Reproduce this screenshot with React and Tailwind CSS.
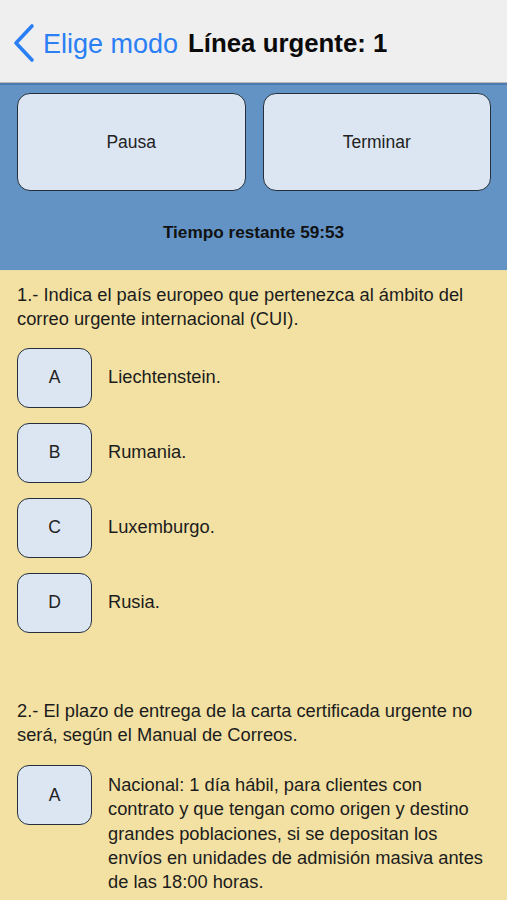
export default function App() {
  const opts1 = [
    ["A", "Liechtenstein."],
    ["B", "Rumania."],
    ["C", "Luxemburgo."],
    ["D", "Rusia."],
  ];
  return (
    <div className="w-[507px] h-[900px] overflow-hidden bg-[#f2e1a3] font-['Liberation_Sans',Arial,sans-serif]">
      {/* Header */}
      <div className="h-[83px] bg-[#efefef] border-b border-[#b9b9b9] flex items-center pl-[13px] pt-[6px]">
        <svg width="22" height="40" viewBox="0 0 22 40" className="shrink-0 -mt-[2px]">
          <polyline points="19,3 3,20 19,37" fill="none" stroke="#2b7ff4" strokeWidth="3.6" strokeLinecap="round" strokeLinejoin="round" />
        </svg>
        <span className="ml-[8px] text-[27px] text-[#2b7ff4] leading-none whitespace-nowrap">Elige modo</span>
        <span className="ml-[10px] text-[25.8px] font-bold text-[#0a0a0a] leading-none whitespace-nowrap">Línea urgente: 1</span>
      </div>
      {/* Blue panel */}
      <div className="h-[188px] bg-[#6393c5] border-t-2 border-[#4d7bb0] border-b border-b-[#e9dca6] flex flex-col">
        <div className="flex gap-[17px] pl-[17px] pr-[16px] pt-[8px]">
          <div className="flex-1 h-[98px] bg-[#dce6f2] border-[1.5px] border-[#26303c] rounded-[13px] flex items-center justify-center text-[17.5px] text-[#222]">Pausa</div>
          <div className="flex-1 h-[98px] bg-[#dce6f2] border-[1.5px] border-[#26303c] rounded-[13px] flex items-center justify-center text-[17.5px] text-[#222]">Terminar</div>
        </div>
        <div className="mt-[29px] text-center text-[17.2px] font-bold text-[#111] leading-[24px]">Tiempo restante 59:53</div>
      </div>
      {/* Question 1 */}
      <div className="px-[17px] pt-[12px]">
        <div className="text-[18.3px] leading-[24.3px] text-[#1c1c1c]">
          <div className="whitespace-nowrap">1.- Indica el país europeo que pertenezca al ámbito del</div>
          <div className="whitespace-nowrap">correo urgente internacional (CUI).</div>
        </div>
        <div className="mt-[16px] flex flex-col gap-[15px]">
          {opts1.map(([l, t]) => (
            <div key={l} className="flex items-center">
              <div className="w-[75px] h-[60px] shrink-0 bg-[#dce6f2] border-[1.5px] border-[#26303c] rounded-[12px] flex items-center justify-center text-[17.5px] text-[#222]">{l}</div>
              <div className="ml-[16px] text-[18.3px] text-[#1c1c1c] leading-[24.3px]">{t}</div>
            </div>
          ))}
        </div>
        {/* Question 2 */}
        <div className="mt-[66px] text-[18.3px] leading-[24.3px] text-[#1c1c1c]">
          <div className="whitespace-nowrap">2.- El plazo de entrega de la carta certificada urgente no</div>
          <div className="whitespace-nowrap">será, según el Manual de Correos.</div>
        </div>
        <div className="mt-[18px] flex items-start">
          <div className="w-[75px] h-[60px] shrink-0 bg-[#dce6f2] border-[1.5px] border-[#26303c] rounded-[12px] flex items-center justify-center text-[17.5px] text-[#222]">A</div>
          <div className="ml-[16px] mt-[8px] text-[18.3px] text-[#1c1c1c] leading-[24.3px]">
            <div className="whitespace-nowrap">Nacional: 1 día hábil, para clientes con</div>
            <div className="whitespace-nowrap">contrato y que tengan como origen y destino</div>
            <div className="whitespace-nowrap">grandes poblaciones, si se depositan los</div>
            <div className="whitespace-nowrap">envíos en unidades de admisión masiva antes</div>
            <div className="whitespace-nowrap">de las 18:00 horas.</div>
          </div>
        </div>
      </div>
    </div>
  );
}
